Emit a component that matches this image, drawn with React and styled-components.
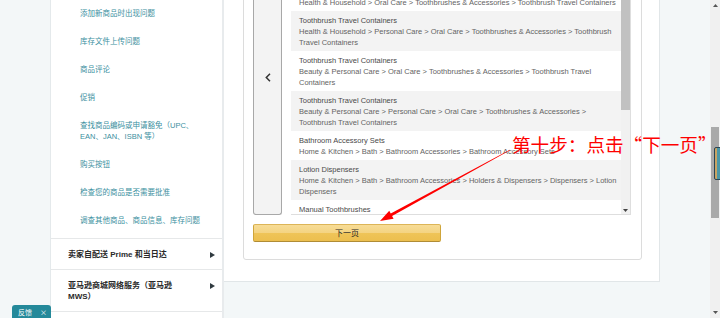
import React from "react";
import styled, { createGlobalStyle } from "styled-components";

const GlobalStyle = createGlobalStyle`
  html, body { margin: 0; padding: 0; width: 720px; height: 318px; overflow: hidden; background: #f3f7f8; }
  #root { width: 720px; height: 318px; }
  * { box-sizing: border-box; }
`;

const Page = styled.div`
  position: relative;
  display: flex;
  width: 720px;
  height: 318px;
  overflow: hidden;
  background: #f3f7f8;
  font-family: "Liberation Sans", "Noto Sans CJK SC", sans-serif;
`;

const Gutter = styled.div`
  width: ${(p) => p.$w}px;
  flex: none;
`;

const Sidebar = styled.nav`
  width: 174px;
  flex: none;
  background: #fff;
  border-left: 1px solid #e4e9eb;
  border-right: 2px solid #e8ebed;
  display: flex;
  flex-direction: column;
`;

const LinkList = styled.ul`
  list-style: none;
  margin: 0;
  padding: 8px 19px 12px 29px;
  display: flex;
  flex-direction: column;
  gap: 17px;
`;

const SideLink = styled.a`
  display: block;
  font-size: 7.5px;
  line-height: 11px;
  color: #3b8fa0;
  text-decoration: none;
`;

const Section = styled.div`
  display: flex;
  align-items: flex-start;
  justify-content: space-between;
  border-top: 1px solid #e6e8e9;
  padding: 10px 7px 9px 17px;
`;

const SectionTitle = styled.span`
  font-weight: 700;
  font-size: 8px;
  line-height: 11px;
  color: #2a2a2a;
  max-width: 120px;
`;

const Caret = styled.svg`
  flex: none;
  margin-top: 2.5px;
`;

const MainColumn = styled.main`
  width: 436px;
  flex: none;
  display: flex;
  flex-direction: column;
`;

const MainPanel = styled.div`
  height: 282px;
  background: #fff;
  border-right: 1px solid #e1e6e8;
  border-bottom: 1px solid #e1e6e8;
  padding: 0 17px 0 19px;
  overflow: hidden;
`;

const Card = styled.section`
  margin-top: -60px;
  border: 1px solid #dcdcdc;
  border-radius: 3px;
  padding: 0 10px 17px 9px;
`;

const ListBox = styled.div`
  display: flex;
  gap: 9px;
  height: 274px;
`;

const PrevPane = styled.div`
  width: 29px;
  flex: none;
  background: #f3f3f3;
  border: 1px solid #a8a8a8;
  border-top: none;
  border-radius: 0 0 3px 3px;
  display: flex;
  align-items: center;
  justify-content: center;
`;

const ListArea = styled.div`
  flex: 1;
  display: flex;
  border-right: 1px solid #dedede;
  border-bottom: 1px solid #dedede;
  overflow: hidden;
`;

const Rows = styled.div`
  width: 330px;
  flex: none;
  padding-top: ${(p) => p.$scroll}px;
`;

const Row = styled.div`
  padding: 4px 0 3px 8px;
  background: ${(p) => (p.$alt ? "#f3f3f3" : "#fff")};
  font-size: 7.5px;
  line-height: 11px;
`;

const RowTitle = styled.div`
  color: #4a4a4a;
`;

const RowPath = styled.div`
  color: #646464;
`;

const ListScrollbar = styled.div`
  width: 9px;
  flex: none;
  background: #f1f1f1;
  display: flex;
  flex-direction: column;
  align-items: center;
`;

const Thumb = styled.div`
  width: ${(p) => p.$w}px;
  height: ${(p) => p.$h}px;
  margin-top: ${(p) => p.$top}px;
  background: ${(p) => p.$c};
  flex: none;
`;

const Spacer = styled.div`
  flex: 1;
`;

const ArrowGlyph = styled.svg`
  flex: none;
  margin: ${(p) => p.$m};
`;

const NextButton = styled.button`
  display: block;
  width: 188px;
  height: 18px;
  margin-top: 9px;
  padding: 0;
  border: 1px solid;
  border-color: #dcb558 #cfa53a #b08c35;
  border-radius: 2px;
  background: linear-gradient(#f7dc96 0%, #f4d483 48%, #efc458 52%, #ecbf4f 100%);
  font-family: "Noto Sans CJK SC", sans-serif;
  font-size: 8px;
  line-height: 16px;
  color: #1f1f1f;
`;

const PageScrollbar = styled.div`
  width: 10px;
  flex: none;
  background: #f0f0f0;
  display: flex;
  flex-direction: column;
  align-items: center;
`;

const FeedbackTab = styled.div`
  position: absolute;
  left: 12px;
  top: 305px;
  width: 39px;
  height: 13px;
  background: #24899a;
  border-radius: 3px 3px 0 0;
  display: flex;
  align-items: center;
  justify-content: space-between;
  padding: 0 4px 0 6px;
  color: #fff;
  font-size: 7px;
  font-family: "Noto Sans CJK SC", sans-serif;
`;

const Widget = styled.div`
  position: absolute;
  left: 714px;
  top: 147px;
  width: 8px;
  height: 33px;
  border: 1.5px solid #2b4554;
  border-radius: 2px;
  background: linear-gradient(90deg, #c9a463 0 40%, #4b97a6 40% 100%);
`;

const Annotation = styled.div`
  position: absolute;
  left: 512px;
  top: 134px;
  font-family: "Noto Sans CJK SC", sans-serif;
  font-size: 18.6px;
  line-height: 19px;
  color: #fe0000;
  white-space: nowrap;
`;

const ArrowLayer = styled.svg`
  position: absolute;
  left: 0;
  top: 0;
  pointer-events: none;
`;

const links = [
  "添加新商品时出现问题",
  "库存文件上传问题",
  "商品评论",
  "促销",
  "查找商品编码或申请豁免（UPC、EAN、JAN、ISBN 等）",
  "购买按钮",
  "检查您的商品是否需要批准",
  "调查其他商品、商品信息、库存问题",
];

const rows = [
  ["Toothbrush Travel Containers", "Health & Household > Oral Care > Toothbrushes & Accessories > Toothbrush Travel Containers"],
  ["Toothbrush Travel Containers", "Health & Household > Personal Care > Oral Care > Toothbrushes & Accessories > Toothbrush Travel Containers"],
  ["Toothbrush Travel Containers", "Beauty & Personal Care > Oral Care > Toothbrushes & Accessories > Toothbrush Travel Containers"],
  ["Toothbrush Travel Containers", "Beauty & Personal Care > Personal Care > Oral Care > Toothbrushes & Accessories > Toothbrush Travel Containers"],
  ["Bathroom Accessory Sets", "Home & Kitchen > Bath > Bathroom Accessories > Bathroom Accessory Sets"],
  ["Lotion Dispensers", "Home & Kitchen > Bath > Bathroom Accessories > Holders & Dispensers > Dispensers > Lotion Dispensers"],
  ["Manual Toothbrushes", "Health & Household > Oral Care > Toothbrushes & Accessories > Manual Toothbrushes"],
];

function arrowPolygon(tx, ty, hx, hy) {
  const dx = hx - tx;
  const dy = hy - ty;
  const len = Math.hypot(dx, dy);
  const ux = dx / len;
  const uy = dy / len;
  const nx = -uy;
  const ny = ux;
  const bx = hx - 13 * ux;
  const by = hy - 13 * uy;
  const pts = [
    [tx + 0.3 * nx, ty + 0.3 * ny],
    [bx + 1.4 * nx, by + 1.4 * ny],
    [bx + 4.5 * nx, by + 4.5 * ny],
    [hx, hy],
    [bx - 4.5 * nx, by - 4.5 * ny],
    [bx - 1.4 * nx, by - 1.4 * ny],
    [tx - 0.3 * nx, ty - 0.3 * ny],
  ];
  return pts.map((p) => p.map((v) => v.toFixed(2)).join(",")).join(" ");
}

const TriRight = () => (
  <Caret width="5" height="6" viewBox="0 0 5 6">
    <path d="M0 0 L5 3 L0 6 Z" fill="#2f3a40" />
  </Caret>
);

export default function App() {
  return (
    <Page>
      <GlobalStyle />
      <Gutter $w={50} />
      <Sidebar>
        <LinkList>
          {links.map((t) => (
            <li key={t}>
              <SideLink href="#">{t}</SideLink>
            </li>
          ))}
        </LinkList>
        <Section>
          <SectionTitle>卖家自配送 Prime 和当日达</SectionTitle>
          <TriRight />
        </Section>
        <Section>
          <SectionTitle>亚马逊商城网络服务（亚马逊 MWS）</SectionTitle>
          <TriRight />
        </Section>
        <Section />
      </Sidebar>
      <MainColumn>
        <MainPanel>
          <Card>
            <ListBox>
              <PrevPane>
                <svg width="6" height="9" viewBox="0 0 6 9">
                  <path d="M5 0.8 L1.3 4.5 L5 8.2" fill="none" stroke="#333" strokeWidth="1.5" />
                </svg>
              </PrevPane>
              <ListArea>
                <Rows $scroll={41}>
                  {rows.map(([title, path], i) => (
                    <Row key={i} $alt={i % 2 === 1}>
                      <RowTitle>{title}</RowTitle>
                      <RowPath>{path}</RowPath>
                    </Row>
                  ))}
                </Rows>
                <ListScrollbar>
                  <Thumb $w={9} $h={159} $top={10} $c="#c1c1c1" />
                  <Spacer />
                  <ArrowGlyph width="5" height="3" viewBox="0 0 5 3" $m="0 0 2px">
                    <path d="M0 0 L5 0 L2.5 3 Z" fill="#444" />
                  </ArrowGlyph>
                </ListScrollbar>
              </ListArea>
            </ListBox>
            <NextButton>下一页</NextButton>
          </Card>
        </MainPanel>
      </MainColumn>
      <Gutter $w={50} />
      <PageScrollbar>
        <ArrowGlyph width="5" height="3" viewBox="0 0 5 3" $m="4px 0 0">
          <path d="M0 3 L5 3 L2.5 0 Z" fill="#555" />
        </ArrowGlyph>
        <Thumb $w={8} $h={91} $top={120} $c="#a9a9a9" />
        <Spacer />
        <ArrowGlyph width="5" height="3" viewBox="0 0 5 3" $m="0 0 4px">
          <path d="M0 0 L5 0 L2.5 3 Z" fill="#555" />
        </ArrowGlyph>
      </PageScrollbar>
      <Widget />
      <FeedbackTab>
        <span>反馈</span>
        <span>×</span>
      </FeedbackTab>
      <Annotation>第十步：点击“下一页”</Annotation>
      <ArrowLayer width="720" height="318" viewBox="0 0 720 318">
        <polygon points={arrowPolygon(510, 150, 380, 221)} fill="#fe0000" />
      </ArrowLayer>
    </Page>
  );
}
